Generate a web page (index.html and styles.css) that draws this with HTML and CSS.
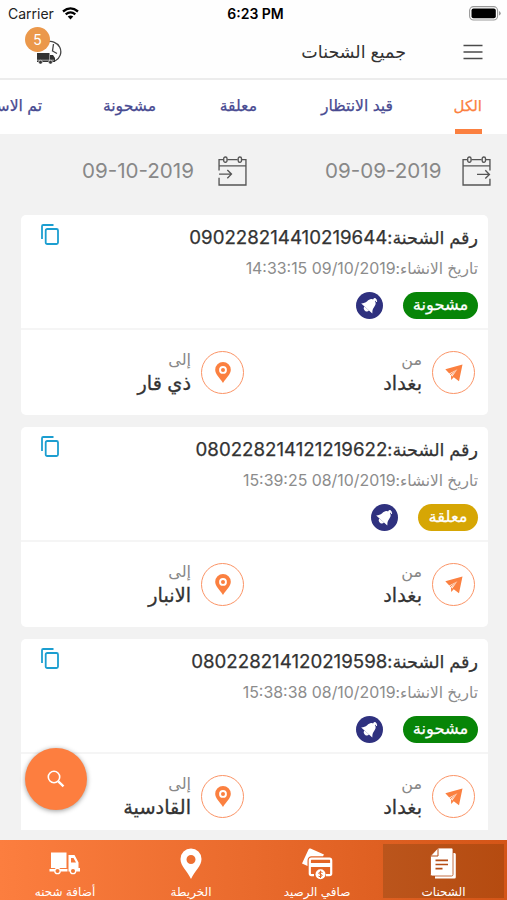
FILE: index.html
```html
<!DOCTYPE html>
<html lang="ar" dir="rtl">
<head>
<meta charset="utf-8">
<title>جميع الشحنات</title>
<link rel="stylesheet" href="styles.css">
</head>
<body>
<svg width="0" height="0" class="defs">
  <symbol id="copy" viewBox="0 0 18 21"><path d="M1 15V2.200Q1 1 2.200 1H12.500" fill="none" stroke="#1c9ed0" stroke-width="1.800"/><rect x="4.700" y="5" width="12.300" height="15" rx="1.500" fill="none" stroke="#1c9ed0" stroke-width="1.800"/></symbol>
  <symbol id="bell" viewBox="0 0 27 27"><circle cx="13.500" cy="13.500" r="13.500" fill="#2f317f"/><g transform="rotate(42 13.500 13.500)" fill="#fff"><path d="M13.500 6.500C10 6.700 9.200 9 9 12 8.800 14.500 7.800 15.500 6 17.600H21C19.200 15.500 18.200 14.500 18 12 17.800 9 17 6.700 13.500 6.500Z"/><circle cx="13.500" cy="5.800" r="1.600"/><path d="M10.500 17.600h6a3 2.800 0 0 1-6 0"/></g><path d="M19.200 6.500Q21 8 20.600 10" fill="none" stroke="#fff" stroke-width="1"/></symbol>
  <symbol id="plane" viewBox="0 0 18 18"><path d="M17.500.5.300 5.200 4.300 9.600 12.500 5.200 6 12 6.200 16 8.700 13.300 14 17.200Z" fill="#fb8040"/><path d="M12.500 5.200 5 9.900 5.200 11.300Z" fill="#fb8040"/><path d="M11.800 6 7.300 12.600 6.600 12Z" fill="#fff"/></symbol>
  <symbol id="pin" viewBox="0 0 16 21"><path fill-rule="evenodd" d="M8 0a7.800 7.800 0 0 0-7.800 7.800C.2 12 4 15 8 21c4-6 7.800-9 7.800-13.200A7.800 7.800 0 0 0 8 0Zm0 4a3.900 3.900 0 1 1 0 7.800A3.900 3.900 0 0 1 8 4Z" fill="#fb8040"/><circle cx="8" cy="7.900" r="2" fill="#fb8040"/></symbol>
  <symbol id="calendar" viewBox="0 0 28 29"><g fill="none" stroke="#555" stroke-width="1.300"><path d="M1 14V3.500H5M9 3.500H19M23 3.500H27V28H1V21M1 9.500H27"/><rect x="5.500" y="1" width="3.200" height="5" rx="1.500"/><rect x="19.500" y="1" width="3.200" height="5" rx="1.500"/><path d="M1 17.500H13M9 13.500 13 17.500 9 21.500"/></g></symbol>
  <symbol id="calendar-out" viewBox="0 0 28 29"><g fill="none" stroke="#555" stroke-width="1.300"><path d="M27 14V3.500H23M19 3.500H9M5 3.500H1V28H27V22M1 9.500H27"/><rect x="5.500" y="1" width="3.200" height="5" rx="1.500"/><rect x="19.500" y="1" width="3.200" height="5" rx="1.500"/><path d="M14.500 17.800H26.500M22.500 13.800 26.500 17.800 22.500 21.800"/></g></symbol>
</svg>

<div class="status" dir="ltr">
  <div class="carrier"><span>Carrier</span>
    <svg width="17" height="13" viewBox="0 0 17 13"><path d="M1 4.500Q8.500-1.700 16 4.500M3.700 7.400Q8.500 3.400 13.300 7.400" fill="none" stroke="#000" stroke-width="2.300"/><path d="M5.700 9.500Q8.500 7.300 11.300 9.500L8.500 12.500Z"/></svg>
  </div>
  <b class="clock">6:23 PM</b>
  <svg width="32" height="15" viewBox="0 0 32 15"><rect x=".6" y=".6" width="28" height="13.400" rx="4" fill="#fff" stroke="#999" stroke-width="1.100"/><rect x="2.500" y="2.400" width="24.300" height="9.800" rx="2" /><path d="M30 5v4.600q1.700-.7 1.700-2.300T30 5" fill="#999"/></svg>
</div>

<header class="header">
  <svg class="menu" width="20" height="16" viewBox="0 0 20 16"><path d="M.5 1.500h19M.5 8h19M.5 14.500h19" stroke="#4b4b4b" stroke-width="1.600"/></svg>
  <h1 class="title">جميع الشحنات</h1>
  <div class="pending">
    <svg width="28" height="25" viewBox="0 0 28 25"><path d="M10 2.500A9.800 9.800 0 1 1 19 21" fill="none" stroke="#444" stroke-width="1.300"/><path d="M17.500 4 16.500 11 21 13.500" fill="none" stroke="#444" stroke-width="1.300"/><path d="M1 13h12.500v9H1zM14 15h3l2 3V22h-5z" fill="#333"/><path d="M1 20.200h17" stroke="#ddd" stroke-width=".7"/><circle cx="4.500" cy="22.200" r="1.900" fill="#333" stroke="#fff" stroke-width=".6"/><circle cx="14.500" cy="22.200" r="1.900" fill="#333" stroke="#fff" stroke-width=".6"/></svg>
    <span class="badge">5</span>
  </div>
</header>

<nav class="tabs">
  <span class="tab tab-all active">الكل</span>
  <span class="tab tab-wait">قيد الانتظار</span>
  <span class="tab tab-hold">معلقة</span>
  <span class="tab tab-ship">مشحونة</span>
  <span class="tab tab-done">تم الاستلام</span>
</nav>

<section class="dates">
  <svg width="29" height="30"><use href="#calendar-out"/></svg>
  <span class="date" dir="ltr">09-09-2019</span>
  <svg class="second" width="29" height="30"><use href="#calendar"/></svg>
  <span class="date date-to" dir="ltr">09-10-2019</span>
</section>

<main class="list">
  <article class="card">
    <div class="summary">
      <svg class="copy" width="18" height="21"><use href="#copy"/></svg>
      <div class="number"><span class="label">رقم الشحنة:</span><bdi>090228214410219644</bdi></div>
      <div class="created"><span class="label">تاريخ الانشاء:</span><bdi dir="ltr">14:33:15 09/10/2019</bdi></div>
      <div class="state"><span class="pill green">مشحونة</span><svg width="27" height="27"><use href="#bell"/></svg></div>
    </div>
    <div class="route">
      <div class="stop"><span class="ring"><svg width="18" height="18"><use href="#plane"/></svg></span><div class="place"><span>من</span><strong>بغداد</strong></div></div>
      <div class="stop"><span class="ring"><svg width="16" height="21"><use href="#pin"/></svg></span><div class="place"><span>إلى</span><strong>ذي قار</strong></div></div>
    </div>
  </article>
  <article class="card">
    <div class="summary">
      <svg class="copy" width="18" height="21"><use href="#copy"/></svg>
      <div class="number"><span class="label">رقم الشحنة:</span><bdi>080228214121219622</bdi></div>
      <div class="created"><span class="label">تاريخ الانشاء:</span><bdi dir="ltr">15:39:25 08/10/2019</bdi></div>
      <div class="state"><span class="pill gold">معلقة</span><svg width="27" height="27"><use href="#bell"/></svg></div>
    </div>
    <div class="route">
      <div class="stop"><span class="ring"><svg width="18" height="18"><use href="#plane"/></svg></span><div class="place"><span>من</span><strong>بغداد</strong></div></div>
      <div class="stop"><span class="ring"><svg width="16" height="21"><use href="#pin"/></svg></span><div class="place"><span>إلى</span><strong>الانبار</strong></div></div>
    </div>
  </article>
  <article class="card">
    <div class="summary">
      <svg class="copy" width="18" height="21"><use href="#copy"/></svg>
      <div class="number"><span class="label">رقم الشحنة:</span><bdi>080228214120219598</bdi></div>
      <div class="created"><span class="label">تاريخ الانشاء:</span><bdi dir="ltr">15:38:38 08/10/2019</bdi></div>
      <div class="state"><span class="pill green">مشحونة</span><svg width="27" height="27"><use href="#bell"/></svg></div>
    </div>
    <div class="route">
      <div class="stop"><span class="ring"><svg width="18" height="18"><use href="#plane"/></svg></span><div class="place"><span>من</span><strong>بغداد</strong></div></div>
      <div class="stop"><span class="ring"><svg width="16" height="21"><use href="#pin"/></svg></span><div class="place"><span>إلى</span><strong>القادسية</strong></div></div>
    </div>
  </article>
</main>

<div class="fab"><svg width="18" height="18" viewBox="0 0 18 18"><circle cx="7" cy="7" r="5.700" fill="none" stroke="#fff" stroke-width="1.600"/><path d="M11.300 11.300 16.500 16.300" stroke="#fff" stroke-width="2.300"/></svg></div>

<footer class="bottom">
  <div class="item selected">
    <svg width="27" height="31" viewBox="0 0 27 31"><path d="M5 30.500V5H24.500Q25.800 5 25.800 6.500V29Q25.800 30.500 24.500 30.500Z" fill="#fff"/><path d="M8 0H21.500Q23 0 23 1.500V26.500Q23 28 21.500 28H2Q.5 28 .5 26.500V8Z" fill="#fff" stroke="#b54d16" stroke-width=".8"/><path d="M8 .5V8H.8" fill="none" stroke="#b54d16" stroke-width="1"/><path d="M5.500 12.300H18M5.500 16.500H18M5.500 20.700H12.500" stroke="#b54d16" stroke-width="1.700"/></svg>
    <span>الشحنات</span>
  </div>
  <div class="item">
    <svg width="31" height="32" viewBox="0 0 31 32"><path d="M0 15.500 6.500 1.500Q7 0 8.500.5L22 6.500 21 8.300H9Q5.500 8.800 5.500 13V18Z" fill="#fff"/><path d="M24 27.200H27.500Q29.200 27.200 29.200 25.500V12.500Q29.200 10.700 27.500 10.700H9.500Q7.800 10.700 7.800 12.500V25.500Q7.800 27.200 9.500 27.200H12" fill="none" stroke="#fff" stroke-width="2.200"/><path d="M7.800 15H29.200V19H7.800Z" fill="#fff"/><circle cx="18.500" cy="26.300" r="5" fill="#fff"/><path d="M20.500 24.500Q18.500 23.200 17.100 24.500T18.500 26.300 19.800 28.100 16.500 28.200M18.500 22.700v7.300" fill="none" stroke="#e5692b" stroke-width="1"/></svg>
    <span>صافي الرصيد</span>
  </div>
  <div class="item">
    <svg width="22" height="32" viewBox="0 0 22 32"><path fill-rule="evenodd" d="M11 .5A10.500 10.500 0 0 0 .5 11C.5 18 7 22.500 11 31 15 22.500 21.500 18 21.500 11A10.500 10.500 0 0 0 11 .5ZM11 7a4.500 4.500 0 1 1 0 9 4.500 4.500 0 0 1 0-9Z" fill="#fff"/></svg>
    <span>الخريطة</span>
  </div>
  <div class="item">
    <svg class="truck" width="32" height="23" viewBox="0 0 32 23"><path d="M2 .5H17.500V16H2ZM.5 17H18.500V19.500H.5Z" fill="#fff"/><path fill-rule="evenodd" d="M19.500 3H25.500L29.500 10.500V16H31V19.500H19.500ZM22 6V10.500H27L24.500 6Z" fill="#fff"/><circle cx="8.500" cy="19" r="2.700" fill="#f07734" stroke="#fff" stroke-width="1.300"/><circle cx="24" cy="19" r="2.700" fill="#f07734" stroke="#fff" stroke-width="1.300"/></svg>
    <span>أضافة شحنه</span>
  </div>
</footer>
</body>
</html>
```

FILE: styles.css
```css
* { box-sizing: border-box; }
body {
  margin: 0;
  width: 507px;
  height: 900px;
  overflow: hidden;
  display: flex;
  flex-direction: column;
  background: #f2f2f2;
  color: #333;
  font-family: Inter, "DejaVu Sans", sans-serif;
  white-space: nowrap;
}
svg { display: block; flex: none; }
.defs { position: absolute; }
.status {
  height: 27px;
  flex: none;
  background: #fefefe;
  display: grid;
  grid-template-columns: 1fr auto 1fr;
  align-items: center;
  padding: 0 6px 0 8px;
  color: #000;
  font-size: 13px;
}
.status > svg { justify-self: end; }
.carrier { display: flex; align-items: center; gap: 8px; font-size: 14px; color: #222; }
.carrier span { width: 46px; }
.clock { margin-left: 2px; font-size: 14px; font-weight: 600; }
.header {
  height: 53px;
  flex: none;
  display: flex;
  align-items: center;
  padding: 0 24px 2px 19px;
  background: #fefefe;
  border-bottom: 2px solid #ececec;
}
.title { margin: 0 57px 0 0; font-size: 17.500px; font-weight: 400; line-height: 24px; }
.pending { position: relative; margin-right: auto; margin-left: 17px; padding-top: 2px; }
.badge {
  position: absolute;
  left: -11px;
  top: -11px;
  width: 25px;
  height: 25px;
  border-radius: 50%;
  background: #eb984b;
  color: #fff;
  font-size: 14px;
  line-height: 25px;
  text-align: center;
}
.tabs {
  height: 54px;
  flex: none;
  display: flex;
  gap: 62px;
  padding-right: 25px;
  background: #fff;
  color: #484a91;
  font-size: 15.600px;
  -webkit-text-stroke: .25px currentColor;
  overflow: hidden;
}
.tab { flex: none; height: 54px; line-height: 51px; }
.tab-all { width: 27px; font-size: 15px; }
.tab-wait { width: 74px; }
.tab-hold { width: 39px; }
.tab-ship { width: 52px; }
.active { color: #fb8040; border-bottom: 5px solid #fb8040; border-radius: 3px 3px 0 0; }
.dates {
  height: 81px;
  flex: none;
  display: flex;
  align-items: center;
  padding: 0 16px 8px 0;
  color: #888;
  font-size: 20.600px;
}
.date { width: 116px; margin-right: 21px; text-align: right; line-height: 26px; padding-top: 1px; }
.second { margin-right: 78px; }
.date-to { margin-right: 24px; }
.list {
  height: 615px;
  flex: none;
  overflow: hidden;
  display: flex;
  flex-direction: column;
  gap: 12px;
  padding: 0 19px 0 21px;
}
.card { height: 200px; flex: none; background: #fff; border-radius: 5px; }
.summary { position: relative; height: 115px; padding: 10px 10px 0; border-bottom: 2px solid #f5f5f5; }
.copy { position: absolute; left: 20px; top: 9px; }
.number, .created { display: flex; align-items: center; }
.number { height: 24px; font-size: 18.700px; -webkit-text-stroke: .25px currentColor; }
.created { height: 24px; margin-top: 7px; font-size: 15.900px; color: #8c8c8c; }
.number .label { font-size: 17.600px; }
.created .label { font-size: 15.400px; }
.state { display: flex; gap: 20px; margin-top: 12px; }
.pill {
  height: 27px;
  border-radius: 14px;
  color: #fff;
  font-size: 16.300px;
  line-height: 25px;
  text-align: center;
  -webkit-text-stroke: .25px currentColor;
}
.green { width: 75px; background: #078507; }
.gold { width: 60px; background: #d6a604; }
.route { height: 85px; display: flex; padding: 0 13px 0 0; }
.stop { width: 231px; flex: none; display: flex; padding-top: 21px; }
.ring {
  width: 43px;
  height: 43px;
  flex: none;
  border: 1px solid #fb9466;
  border-radius: 50%;
  display: grid;
  place-items: center;
}
.place { display: flex; flex-direction: column; margin: -4px 10px 0 0; }
.place span { height: 24px; line-height: 24px; font-size: 16px; color: #888; }
.place strong { height: 28px; line-height: 25px; font-size: 19.300px; font-weight: 400; -webkit-text-stroke: .3px currentColor; }
.fab {
  position: absolute;
  left: 25px;
  top: 748px;
  width: 62px;
  height: 62px;
  border-radius: 50%;
  background: #fd7e3f;
  box-shadow: 0 1px 5px rgba(0, 0, 0, .4);
  display: grid;
  place-items: center;
}
.bottom {
  height: 60px;
  flex: none;
  margin-top: 10px;
  display: flex;
  background: linear-gradient(90deg, #fc7e3f, #e96a2c 50%, #d45517);
  padding: 4px 3px 2px 0;
  color: #fff;
  font-size: 12px;
}
.item { flex: 0 0 126px; display: flex; flex-direction: column; align-items: center; padding-top: 4px; }
.item span { margin-top: auto; line-height: 13px; }
.truck { margin-top: 4px; }
.selected { background: linear-gradient(90deg, #bb551c, #b54b10); flex: 0 0 121px; margin-left: 3px; }
```
